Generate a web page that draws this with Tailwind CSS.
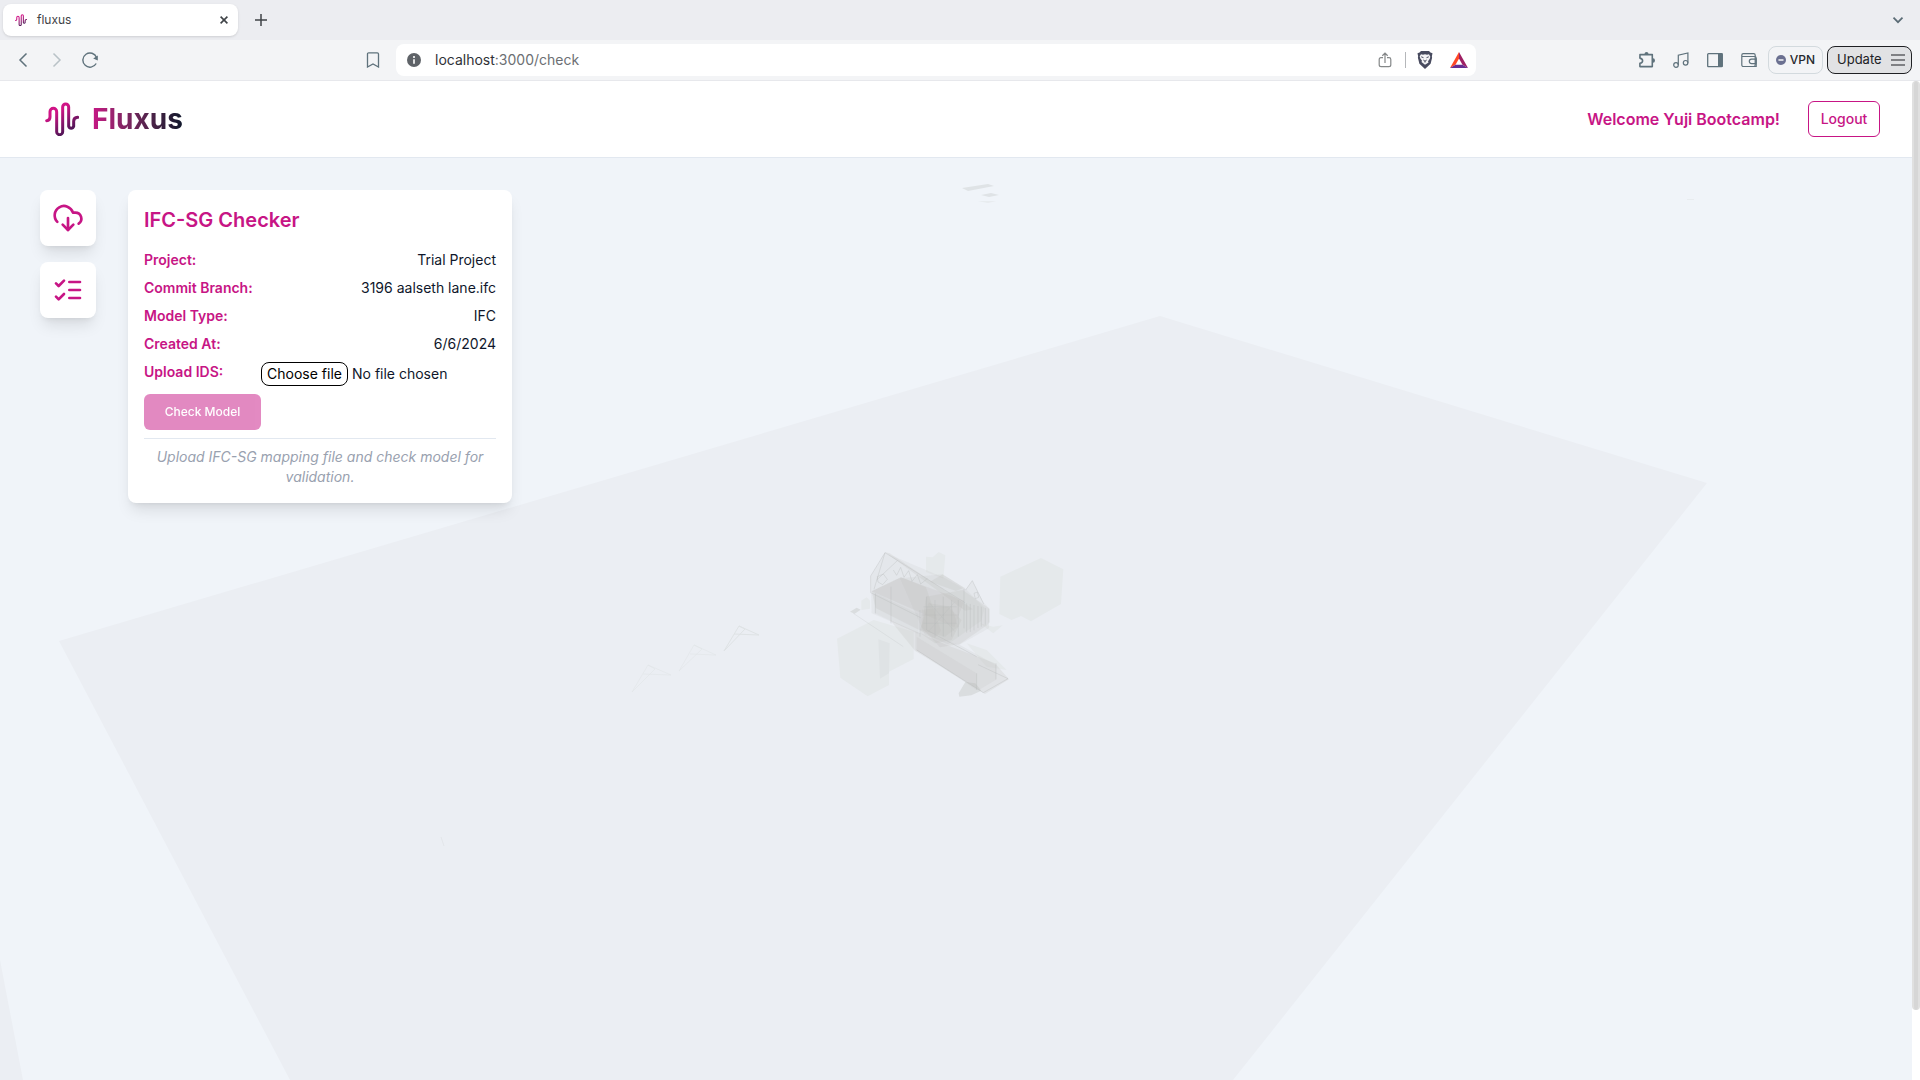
<!DOCTYPE html>
<html lang="en">
<head>
  <meta charset="UTF-8" />
  <meta name="viewport" content="width=device-width, initial-scale=1.0" />
  <title>fluxus</title>
  <script src="https://cdn.jsdelivr.net/npm/@tailwindcss/browser@4"></script>
</head>
<body class="h-screen flex flex-col overflow-hidden bg-white font-['Inter',sans-serif] text-slate-900">

  <!-- shared logo -->
  <svg width="0" height="0" class="absolute" aria-hidden="true">
    <defs>
      <linearGradient id="logoGradient" gradientUnits="userSpaceOnUse" x1="170" y1="335" x2="215" y2="410">
        <stop offset="0" stop-color="#d01486" />
        <stop offset="1" stop-color="#2a1648" />
      </linearGradient>
      <symbol id="logo" viewBox="135 305 102 102">
        <path d="M140 361 Q150 360 150 350 V334 A10 10 0 0 1 170 334 V394 A9 9 0 0 0 188 394 V320 A9 9 0 0 1 206 320 V378 A8 9 0 0 0 221 378 V363 Q221 352 233 351" fill="none" stroke="url(#logoGradient)" stroke-width="9" stroke-linecap="round" />
      </symbol>
    </defs>
  </svg>

  <!-- tab strip -->
  <div class="flex h-10 shrink-0 items-center bg-[#ecedf1] pl-[3px] pr-4 text-[#3f4347]">
    <div class="flex h-8 w-[235px] items-center rounded-lg bg-white pl-3 pr-1.5 shadow-sm">
      <svg class="size-3"><use href="#logo" /></svg>
      <span class="ml-2.5 flex-1 text-xs">fluxus</span>
      <button aria-label="Close tab" class="p-1">
        <svg class="size-2" viewBox="0 0 8 8" fill="none" stroke="currentColor" stroke-width="1.6"><path d="M.6.6l6.8 6.8M7.4.6L.6 7.4" /></svg>
      </button>
    </div>
    <button aria-label="New tab" class="ml-[17px]">
      <svg class="size-3" viewBox="0 0 12 12" fill="none" stroke="currentColor" stroke-width="1.5"><path d="M6 0v12M0 6h12" /></svg>
    </button>
    <button aria-label="Search tabs" class="ml-auto text-[#5a6b75]">
      <svg class="size-3" viewBox="0 0 12 12" fill="none" stroke="currentColor" stroke-width="1.7"><path d="M1.5 3.7L6 8.2l4.500-4.500" /></svg>
    </button>
  </div>

  <!-- toolbar -->
  <div class="flex h-[41px] shrink-0 items-center border-b border-[#e7e8ec] bg-[#f3f4f6] text-[#5f727c]">
    <div class="flex w-[396px] items-center pl-4 pr-4">
      <button aria-label="Back"><svg class="size-4" viewBox="0 0 16 16" fill="none" stroke="currentColor" stroke-width="1.5"><path d="M10.500 1.500L4 8l6.500 6.500" /></svg></button>
      <button aria-label="Forward" class="ml-4 text-[#b9c2c7]"><svg class="size-4" viewBox="0 0 16 16" fill="none" stroke="currentColor" stroke-width="1.5"><path d="M5.500 1.500L12 8l-6.500 6.500" /></svg></button>
      <button aria-label="Reload" class="ml-[18px]">
        <svg class="size-4" viewBox="0 0 16 16" fill="none" stroke="currentColor" stroke-width="1.4"><path d="M14.200 11.500A7.100 7.100 0 1 1 14.600 5.500" /><path d="M15.800 3.500v5l-4.600-2z" fill="currentColor" stroke="none" /></svg>
      </button>
      <button aria-label="Bookmark" class="ml-auto">
        <svg class="h-4 w-3.5" viewBox="0 0 14 16" fill="none" stroke="currentColor" stroke-width="1.3"><path d="M1.500 2Q1.500 .8 2.700 .8h8.600q1.200 0 1.200 1.200v13L7 12l-5.500 3z" /></svg>
      </button>
    </div>
    <div class="flex h-8 flex-1 items-center rounded-lg bg-white pl-[11px] pr-2">
      <svg class="size-3.5" viewBox="0 0 14 14"><circle cx="7" cy="7" r="7" fill="#5f6368" /><path d="M7 3v2M7 6.200v4.600" stroke="#fff" stroke-width="1.600" /></svg>
      <a href="#" class="ml-[14px] flex-1 text-sm text-[#6c6f73]"><span class="text-[#303236]">localhost</span>:3000/check</a>
      <button aria-label="Share">
        <svg class="h-4 w-3.5" viewBox="0 0 14 16" fill="none" stroke="#858889" stroke-width="1.200"><path d="M5 5.600H3Q1.200 5.600 1.200 7.400v5.300q0 1.900 1.900 1.900h7.800q1.900 0 1.900-1.900V7.400q0-1.800-1.800-1.800H9M7 11V1.200M4.300 3.800L7 1.200l2.700 2.600" /></svg>
      </button>
      <span class="ml-[13px] h-4 w-px bg-[#b5b7ba]"></span>
      <button aria-label="Shields" class="ml-[11px]">
        <svg class="h-[18px] w-4" viewBox="0 0 16 18"><path d="M4 0h8l1.500 1.500 2 .8-.6 3 .2 1.500-1.500 6L8 18l-5.600-5.200-1.500-6 .2-1.500-.6-3 2-.8z" fill="#484b5f" /><path d="M4 3.200l2 .5 2-.5 2 .5 2-.5 1.300 2.600-.5 2-1.800 2.400.5 1.300L8 13.800 4.500 11l.5-1.300-1.800-2.400-.5-2z" fill="#f4f4f6" /><path d="M4.200 5.800l2.300.9M11.800 5.800l-2.300.9M6.300 9L8 10.200 9.700 9M8 10v1.500" fill="none" stroke="#484b5f" stroke-width="1" /></svg>
      </button>
      <button aria-label="Rewards" class="ml-[17px]">
        <svg class="h-4 w-[18px]" viewBox="0 0 18 16"><path d="M9 0L0 16l5.500-3.200L9 6.500z" fill="#ff4724" /><path d="M9 0l9 16-5.500-3.200L9 6.500z" fill="#9e1f63" /><path d="M0 16h18l-5.500-3.200h-7z" fill="#662d91" /></svg>
      </button>
    </div>
    <div class="flex w-[444px] items-center justify-end pr-2">
      <div class="mr-[11px] flex items-center gap-[18px]">
        <button aria-label="Extensions"><svg class="h-4 w-[17px]" viewBox="0 0 17 16" fill="none" stroke="currentColor" stroke-width="1.600"><path d="M2 2.600h12.300v12H1.900v-3.300q2.700-.5 2.700-2.600T1.900 6.100z" stroke-linejoin="round" /><path d="M6.500 2a2 1.900 0 0 1 4 0zM15 6.300a2 2.200 0 0 1 0 4.400z" fill="currentColor" stroke="none" /></svg></button>
        <button aria-label="Media"><svg class="size-4" viewBox="0 0 16 16" fill="none" stroke="currentColor" stroke-width="1.200"><circle cx="3" cy="13" r="2.300" /><circle cx="12.600" cy="10.800" r="2.300" /><path d="M5.300 13V3.200L14.900 1v9.800" /></svg></button>
        <button aria-label="Sidebar"><svg class="size-4" viewBox="0 0 16 16"><rect x=".7" y="1.700" width="14.600" height="13" rx=".8" fill="none" stroke="currentColor" stroke-width="1.300" /><path d="M11 1.500h4.500v13.200H11z" fill="currentColor" /></svg></button>
        <button aria-label="Wallet"><svg class="size-4" viewBox="0 0 16 16" fill="none" stroke="currentColor" stroke-width="1.200"><rect x=".8" y="1.700" width="13.400" height="12.800" rx="1.500" /><path d="M1 4.500h12.500q1.700 0 1.700 1.500v8.500H2" /><path d="M15 7.200h-4.500a2.200 2.200 0 0 0 0 4.400H15z" /></svg></button>
      </div>
      <button class="flex h-7 w-[55px] items-center justify-center gap-1 rounded-lg border border-[#d3dade] text-xs font-medium text-[#26282d]">
        <svg class="size-2.5" viewBox="0 0 10 10"><circle cx="5" cy="5" r="5" fill="#6b7090" /><path d="M2.500 5h5" stroke="#fff" stroke-width="1.400" /></svg>VPN
      </button>
      <button class="ml-1 flex h-7 w-[85px] items-center justify-between rounded-lg border border-[#202124] bg-[#e1e2e4] pl-[9px] pr-1.5 text-[13px] text-[#202124]">
        Update
        <svg class="h-3 w-3.5" viewBox="0 0 14 12" stroke="currentColor" stroke-width="1.200"><path d="M0 1h14M0 6h14M0 11h14" /></svg>
      </button>
    </div>
  </div>

  <div class="flex min-h-0 flex-1">
    <div class="flex min-w-0 flex-1 flex-col">
      <!-- app header -->
      <header class="flex h-[77px] shrink-0 items-center justify-between border-b border-slate-200 pl-[45px] pr-8">
        <a href="#" class="flex items-center gap-[13px]">
          <svg class="size-[34px]"><use href="#logo" /></svg>
          <span class="bg-linear-to-r from-[#c71585] to-slate-900 bg-clip-text text-[28px] font-bold text-transparent">Fluxus</span>
        </a>
        <div class="flex items-center gap-7 text-[#c71585]">
          <span class="font-semibold">Welcome Yuji Bootcamp!</span>
          <button class="h-9 w-[72px] rounded-md border border-[#c71585] text-sm font-medium">Logout</button>
        </div>
      </header>

      <main class="relative flex flex-1 items-start gap-8 bg-[#f0f4f9] px-10 py-8">
        <!-- model viewer -->
        <svg class="absolute inset-0 size-full" viewBox="0 158 1912 922" preserveAspectRatio="xMidYMid slice" aria-hidden="true">
          <path d="M1160 316L1707 483 1233 1080H290L59 641zM0 960l23 120H0z" fill="#ebeef3" />
          <g fill="#dfe3e6">
            <path d="M962 188l26-4 6 2-26 5zM981 195l10-2 8 2-10 2z" />
            <path d="M978 201h18l-8 2z" opacity=".5" />
            <path d="M1687 199h7v1h-7z" opacity=".5" />
          </g>
          <g fill="none" stroke="#dfe3e5">
            <path d="M724 651l15-25 20 9-25-1M739 626l6 3-21 22" />
            <path d="M679 671l15-26 22 10-26-1M694 645l8 4-23 22" opacity=".5" />
            <path d="M632 692l16-27 23 10-28-1M648 665l7 4-23 23" opacity=".5" />
            <path d="M441 837l3 9" opacity=".7" />
          </g>
          <g transform="translate(820 530) scale(.3333)">
            <g fill="#e5e9eb">
              <path d="M541 140l122-56 67 34-7 104-90 52-30-16-28 12-37-18z" />
              <path d="M51 326l110-56 120 35v82l-74 38v40l-64 34-82-56z" />
              <path d="M318 80l20 2 18-16 20 10-6 70-52-20zM124 212l16-10 10 10v24l-26 4z" />
              <path d="M480 280l40 10 28-4-28 24zM440 340l60 20 60 60-60-10z" />
            </g>
            <path d="M90 245l20-12 12 6-18 12zM416 490l20-34 30 4 18 22-30 14-36 4z" fill="#dadddf" />
            <path d="M175 328l34 12-2 90-27 16z" fill="#dfe3e5" />
            <g fill="#b8b8b6" fill-opacity=".2">
              <path d="M152 138l43-70 180 76 62 35 20-28 34 66 16 18v60l-90 50-130-38-132-57z" fill-opacity=".12" />
              <path d="M155 184l88-42 75 30 45 130-18 22-178-90z" />
              <path d="M155 184l88-42 190 70-30 80z" />
              <path d="M165 190l130 62v60l-130-62z" fill-opacity=".12" />
              <path d="M240 145l126-12 68 40 60 60-10 40-100 70-70-30z" fill-opacity=".14" />
              <path d="M318 200l110-20 78 54v48l-86 60-60 10-55-60z" />
              <path d="M305 240l80-10 40 40-30 60-50 10-44-30z" />
              <path d="M325 220l70 10 20 60-40 30-75-20z" />
              <path d="M330 155l38-22 64 40-24 10z" />
              <path d="M210 270l170 75 145 55 42 48-72 44-210-130z" />
              <path d="M286 305l134 40 108 60v44l-50 30-192-120z" fill-opacity=".14" />
              <path d="M290 320l180 110v50L290 360z" fill-opacity=".14" />
              <path d="M195 66l14 4 250 168-24 4z" />
            </g>
            <g fill="none" stroke="#b4b6b6" stroke-opacity=".32" stroke-width="3">
              <path d="M152 138l43-70 240 150M152 138v50l150 75M195 68l-33 110M170 150l62-58M166 190v60M213 170v110M432 175v120M437 180l20-28 34 70M172 140l18-8 12 16-14 16-14-8zM462 190l10-4 4 16-10 4zM220 120l10 16 12-24 10 30 14-20 10 32 16-20 10 28 20-16" />
              <path d="M440 220v88M451 222v84M462 225v76M474 228v66M484 230v60M496 234v50M507 236v42M300 240v80M320 200v100M345 210v110M370 200v120M395 210v110M415 210v110M290 360l200 128 74-42-90-42M470 430v50M528 400v48M320 300l150 80" />
              <path d="M100 250l150 100M310 230h100M305 255h110M310 280h100M325 215l80 90M405 215l-80 90" stroke-opacity=".2" />
            </g>
          </g>
        </svg>

        <!-- tools -->
        <nav class="relative flex flex-col gap-4 text-[#c71585]">
          <button aria-label="Load model" class="flex size-14 items-center justify-center rounded-lg bg-white shadow-lg">
            <svg class="size-8" viewBox="0 0 24 24" fill="none" stroke="currentColor" stroke-width="2" stroke-linecap="round" stroke-linejoin="round"><path d="M4 14.899A7 7 0 1 1 15.710 8h1.790a4.500 4.500 0 0 1 2.500 8.242" /><path d="M12 12v9" /><path d="m8 17 4 4 4-4" /></svg>
          </button>
          <button aria-label="Checker" class="flex size-14 items-center justify-center rounded-lg bg-white shadow-lg">
            <svg class="size-8" viewBox="0 0 24 24" fill="none" stroke="currentColor" stroke-width="2" stroke-linecap="round" stroke-linejoin="round"><path d="m3 17 2 2 4-4" /><path d="m3 7 2 2 4-4" /><path d="M13 6h8M13 12h8M13 18h8" /></svg>
          </button>
        </nav>

        <!-- checker panel -->
        <section class="relative w-96 rounded-lg bg-white p-4 text-sm shadow-lg">
          <h2 class="mb-4 text-xl/7 font-semibold text-[#c71585]">IFC-SG Checker</h2>
          <form onsubmit="return false">
            <dl class="space-y-2">
              <div class="flex justify-between"><dt class="font-semibold text-[#c71585]">Project:</dt><dd>Trial Project</dd></div>
              <div class="flex justify-between"><dt class="font-semibold text-[#c71585]">Commit Branch:</dt><dd>3196 aalseth lane.ifc</dd></div>
              <div class="flex justify-between"><dt class="font-semibold text-[#c71585]">Model Type:</dt><dd>IFC</dd></div>
              <div class="flex justify-between"><dt class="font-semibold text-[#c71585]">Created At:</dt><dd>6/6/2024</dd></div>
            </dl>
            <div class="mt-2 flex justify-between">
              <label for="ids" class="font-semibold text-[#c71585]">Upload IDS:</label>
              <div class="flex w-[235px] items-center gap-1">
                <input id="ids" type="file" class="sr-only" />
                <label for="ids" class="flex h-6 w-[87px] items-center justify-center rounded-lg border border-black text-black">Choose file</label>
                <span id="fileName">No file chosen</span>
              </div>
            </div>
            <button id="checkBtn" disabled class="mt-2 block h-9 w-[117px] rounded-md bg-[#c71585] text-xs font-medium text-white disabled:opacity-50">Check Model</button>
          </form>
          <p class="mt-2 border-t border-slate-200 pt-2 text-center italic text-gray-400">Upload IFC-SG mapping file and check model for validation.</p>
        </section>
      </main>
    </div>

    <!-- scrollbar -->
    <div class="w-2 shrink-0 bg-white">
      <div class="h-[93%] rounded-full border-x-2 border-[#e0e0e0] bg-[#d6d6d6]"></div>
    </div>
  </div>

  <script>
    const ids = document.getElementById("ids");

    ids.addEventListener("change", function () {
      const file = ids.files[0];
      document.getElementById("fileName").textContent = file ? file.name : "No file chosen";
      document.getElementById("checkBtn").disabled = !file;
    });
  </script>
</body>
</html>
